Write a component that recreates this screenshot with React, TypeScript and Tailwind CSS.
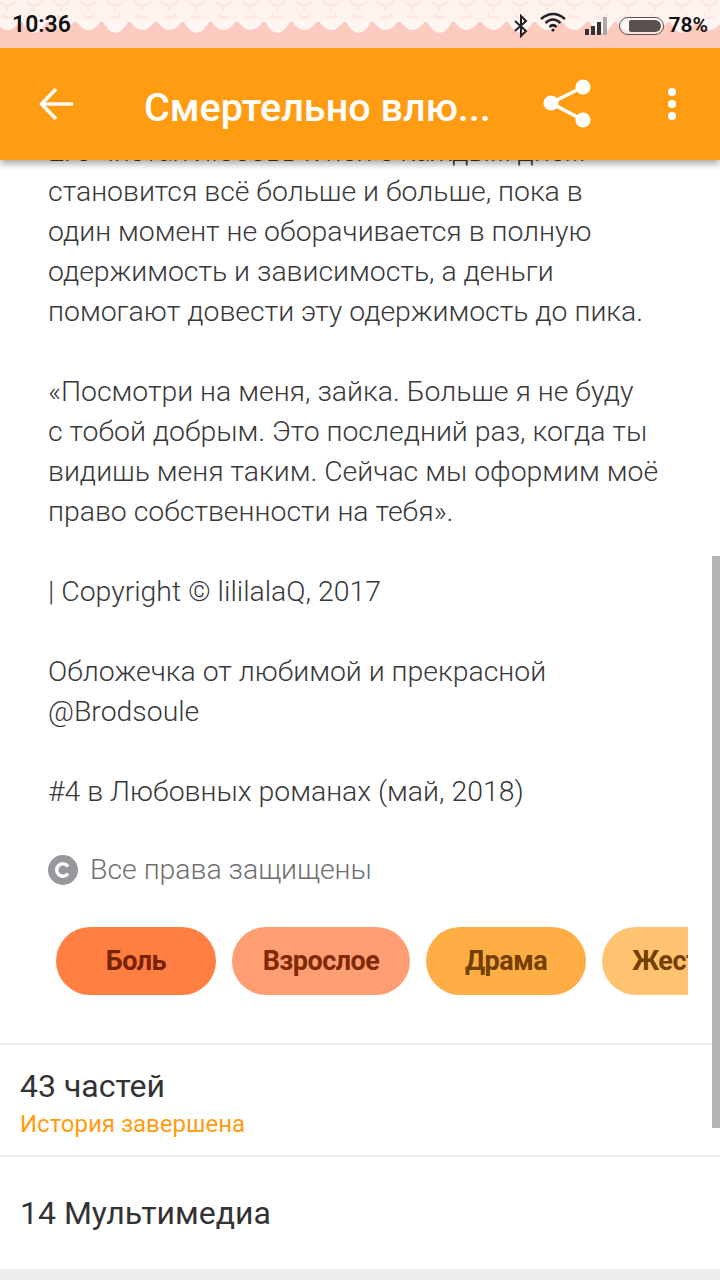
import type React from "react";

const Lace = (): React.ReactElement => {
	const scallops = Array.from({ length: 27 }, (_, i) => i * 27 - 6);
	return (
		<svg className="absolute top-0 left-0" width="720" height="48" viewBox="0 0 720 48" aria-hidden="true">
			<rect x="0" y="0" width="720" height="22" fill="#fff3f0" />
			{scallops.map((x, i) => (
				<path key={x} d={`M${x} 20 q13.5 ${i % 3 === 1 ? 26 : 20} 27 0 z`} fill="#fff5f3" />
			))}
			{scallops.map((x) => (
				<g key={`g${x}`} stroke="#fbd9d1" strokeWidth="2" fill="none" opacity="0.5">
					<path d={`M${x + 5} 1 q8 9 17 0`} />
					<path d={`M${x + 8} 15 q5 6 11 0`} />
					<path d={`M${x + 13} 5 v6`} />
				</g>
			))}
		</svg>
	);
};

const StatusBar = (): React.ReactElement => {
	return (
		<div className="relative h-12 overflow-hidden bg-[#fccabe]">
			<Lace />
			<div className="relative flex h-full items-center justify-between pt-[3px] pr-3 pl-3 text-[23px] font-semibold text-[#111]">
				<span>10:36</span>
				<div className="flex items-center">
					<svg width="16" height="24" viewBox="0 0 16 24" fill="none" stroke="#222" strokeWidth="2">
						<path d="M2 7 L13 17 L8 22 V2 L13 7 L2 17" />
					</svg>
					<svg className="-mt-[7px] ml-[11px]" width="26" height="20" viewBox="0 0 26 20" fill="none" stroke="#222" strokeWidth="2.6">
						<path d="M1 7 Q13 -3 25 7" />
						<path d="M5.5 11 Q13 4 20.5 11" />
						<path d="M9.5 15 Q13 11.5 16.5 15" />
						<circle cx="13" cy="18" r="1.6" fill="#222" stroke="none" />
					</svg>
					<svg className="ml-[18px]" width="26" height="20" viewBox="0 0 26 20">
						<rect x="1" y="13" width="4" height="6" fill="#333" />
						<rect x="7" y="10" width="4" height="9" fill="#333" />
						<rect x="13" y="6" width="4" height="13" fill="#333" />
						<rect x="19" y="1" width="4" height="18" fill="#aaa" />
					</svg>
					<div className="ml-[9px] flex h-[18px] w-[45px] items-center justify-end rounded-[9px] border-[1.5px] border-[#555] bg-white/50 pr-[2px]">
						<div className="h-[12px] w-[32px] rounded-l-[2px] rounded-r-[6px] bg-[#5a5050]" />
					</div>
					<span className="ml-[5px] text-[21px]">78%</span>
				</div>
			</div>
		</div>
	);
};

const Toolbar = (): React.ReactElement => {
	return (
		<div className="flex h-28 items-center bg-[#ff9c12] text-white shadow-[0_3px_8px_rgba(0,0,0,0.4)]">
			<svg className="ml-[38px] shrink-0" width="36" height="36" viewBox="0 0 36 36" fill="none" stroke="white" strokeWidth="3.4">
				<path d="M35 18 H4" />
				<path d="M18 3 L3.5 18 L18 33" />
			</svg>
			<div className="ml-[70px] w-[350px] pt-2 text-[39.6px] leading-none font-medium">Смертельно влю...</div>
			<svg className="ml-[49px] shrink-0" width="50" height="50" viewBox="0 0 50 50" fill="white" stroke="white">
				<path d="M40 8 L8 24 L40 41" fill="none" strokeWidth="3.6" />
				<circle cx="40" cy="8" r="7.6" stroke="none" />
				<circle cx="8" cy="24" r="7.6" stroke="none" />
				<circle cx="40" cy="41" r="7.6" stroke="none" />
			</svg>
			<div className="ml-[75px] flex flex-col gap-1">
				<span className="size-2 rounded-full bg-white" />
				<span className="size-2 rounded-full bg-white" />
				<span className="size-2 rounded-full bg-white" />
			</div>
		</div>
	);
};

const Tag = ({ label, className }: { label: string; className: string }): React.ReactElement => {
	return (
		<div className={`flex h-[68px] shrink-0 items-center justify-center rounded-[34px] text-[27px] font-bold tracking-[-0.5px] ${className}`}>
			{label}
		</div>
	);
};

export default function App(): React.ReactElement {
	return (
		<div className="relative flex h-[1280px] w-[720px] flex-col overflow-hidden bg-white font-['Roboto',sans-serif]">
			<header className="relative z-10 -mb-[28px]">
				<StatusBar />
				<Toolbar />
			</header>

			<section className="pl-12 text-[28.4px] leading-10 font-light text-[#38383a]">
				<p>Его чистая любовь к ней с каждым днём</p>
				<p>становится всё больше и больше, пока в</p>
				<p>один момент не оборачивается в полную</p>
				<p>одержимость и зависимость, а деньги</p>
				<p>помогают довести эту одержимость до пика.</p>
				<p className="mt-10">«Посмотри на меня, зайка. Больше я не буду</p>
				<p>с тобой добрым. Это последний раз, когда ты</p>
				<p>видишь меня таким. Сейчас мы оформим моё</p>
				<p>право собственности на тебя».</p>
				<p className="mt-10">| Copyright © lililalaQ, 2017</p>
				<p className="mt-10">Обложечка от любимой и прекрасной</p>
				<p>@Brodsoule</p>
				<p className="mt-10">#4 в Любовных романах (май, 2018)</p>
			</section>

			<div className="mt-[38px] flex items-center pl-12">
				<div className="flex size-[30px] items-center justify-center rounded-full bg-[#98989c]">
					<svg width="18" height="18" viewBox="0 0 18 18" fill="none" stroke="white" strokeWidth="3.4">
						<path d="M14 5.5 A6.2 6.2 0 1 0 14 12.5" />
					</svg>
				</div>
				<span className="ml-3 text-[28.4px] leading-10 font-light text-[#6f6f73]">Все права защищены</span>
			</div>

			<div className="mt-[37px] ml-14 flex w-[632px] gap-4 overflow-hidden">
				<Tag label="Боль" className="w-40 bg-[#ff7f42] text-[#7a2200]" />
				<Tag label="Взрослое" className="w-[178px] bg-[#ff9e73] text-[#7f2a06]" />
				<Tag label="Драма" className="w-40 bg-[#ffae45] text-[#744000]" />
				<Tag label="Жестокость" className="w-[212px] bg-[#ffc371] text-[#744000]" />
			</div>

			<div className="mt-[48px] h-[112px] border-t-2 border-[#ececec] pt-[21px] pl-5">
				<p className="text-[32px] leading-10 text-[#333335]">43 частей</p>
				<p className="pt-[2px] text-[24px] leading-8 text-[#ff9c12]">История завершена</p>
			</div>

			<div className="flex h-[114px] items-center border-t-2 border-[#ececec] pl-5">
				<p className="text-[32px] leading-10 text-[#333335]">14 Мультимедиа</p>
			</div>

			<div className="flex-1 bg-[#eeedf0]" />

			<div className="absolute top-[556px] right-0 h-[572px] w-2 bg-[#b4b4b4]" />
		</div>
	);
}
